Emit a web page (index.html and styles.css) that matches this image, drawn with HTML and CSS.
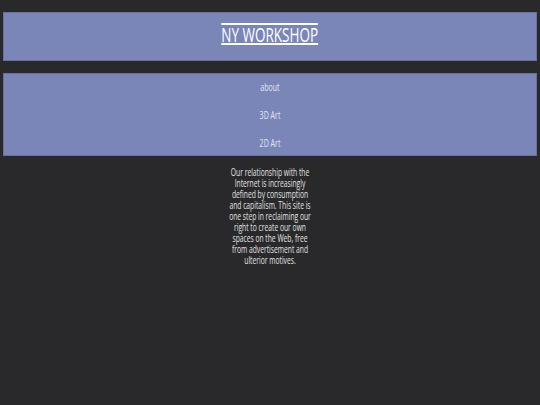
FILE: index.html
```html
<!DOCTYPE html>
<html>
<head>
<meta charset="utf-8">
<link rel="stylesheet" href="styles.css">
</head>
<body>
<header class="banner">
  <h1 class="title"><a class="title-link" href="#"><span class="narrow">NY WORKSHOP</span></a></h1>
</header>
<nav class="menu">
  <a class="menu-item" href="#">about</a>
  <a class="menu-item" href="#">3D Art</a>
  <a class="menu-item" href="#">2D Art</a>
</nav>
<p class="intro">Our relationship with the Internet is increasingly defined by consumption and capitalism. This site is one step in reclaiming our right to create our own spaces on the Web, free from advertisement and ulterior motives.</p>
</body>
</html>
```
FILE: styles.css
```css
html, body {
  margin: 0;
  padding: 0;
  background: #29292b;
}
body {
  padding: 12px 3px;
  font-family: "Open Sans", "DejaVu Sans", sans-serif;
  color: #e6e6ee;
}
.banner {
  height: 37px;
  padding-top: 10px;
  background: #7b86b8;
  border: 1px solid #6a6f98;
}
.title {
  margin: 0;
  display: flex;
  justify-content: center;
  font-size: 20px;
  font-weight: normal;
  line-height: 19px;
}
.title-link {
  display: flex;
  color: #ffffff;
  text-decoration: none;
}
.narrow {
  display: block;
  transform: scaleX(0.675);
  border-top: 2px solid #ffffff;
  text-decoration: underline;
  text-decoration-thickness: 2px;
  text-underline-offset: 1px;
}
.menu {
  margin-top: 12px;
  background: #7b86b8;
  border: 1px solid #6a6f98;
  display: flex;
  flex-direction: column;
}
.menu-item {
  display: block;
  height: 28px;
  line-height: 26px;
  text-align: center;
  color: #e4e6f2;
  font-size: 10.5px;
  text-decoration: none;
  transform: scaleX(0.67);
}
.menu-item:last-child {
  height: 25px;
}
.intro {
  width: 132px;
  margin: 11px auto 0;
  text-align: center;
  font-size: 10.5px;
  line-height: 11px;
  color: #e2e2e2;
  transform: scaleX(0.64);
}
```
